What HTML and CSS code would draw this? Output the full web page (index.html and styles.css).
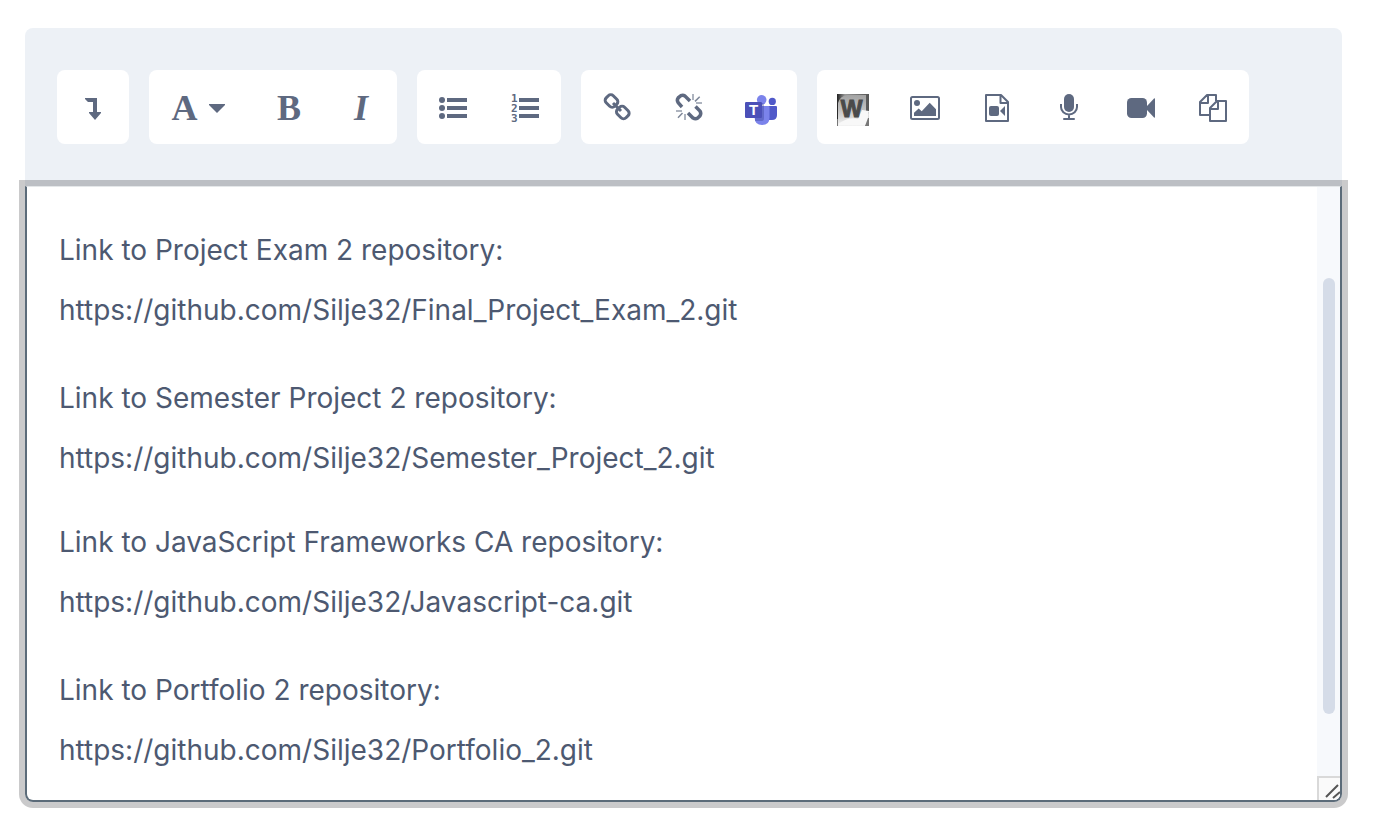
FILE: index.html
```html
<!DOCTYPE html>
<html lang="en">
<head>
<meta charset="utf-8">
<title>Editor</title>
<link rel="stylesheet" href="styles.css">
</head>
<body>
<main class="editor">
  <div class="toolbar" role="toolbar" aria-label="Formatting">
    <div class="group">
      <button class="tool" type="button" aria-label="Show more buttons"><svg class="icon" viewBox="0 0 32 32"><path d="M8 7H20V21H24V22L18 29L12 22V21H16V11H11L8 8z"/></svg></button>
    </div>
    <div class="group">
      <button class="tool tool-style" type="button" aria-label="Paragraph styles"><span class="letter">A</span><svg class="caret" viewBox="0 0 16 9"><path d="M0 0H16V1L8 9L0 1z"/></svg></button>
      <button class="tool tool-letter" type="button" aria-label="Bold"><span class="letter">B</span></button>
      <button class="tool tool-letter" type="button" aria-label="Italic"><span class="letter italic">I</span></button>
    </div>
    <div class="group">
      <button class="tool" type="button" aria-label="Unordered list"><svg class="icon" viewBox="0 0 32 32"><circle cx="5" cy="9" r="3"/><circle cx="5" cy="17" r="3"/><circle cx="5" cy="25" r="3"/><path d="M10 7h20v4H10zM10 15h20v4H10zM10 23h20v4H10z"/></svg></button>
      <button class="tool" type="button" aria-label="Ordered list"><svg class="icon" viewBox="0 0 32 32"><text class="num"><tspan x="2" y="11">1</tspan><tspan x="2" y="21">2</tspan><tspan x="2" y="31">3</tspan></text><path d="M10 7h20v4H10zM10 15h20v4H10zM10 23h20v4H10z"/></svg></button>
    </div>
    <div class="group">
      <button class="tool" type="button" aria-label="Link"><svg class="icon line" viewBox="0 0 32 32" stroke-width="3"><rect x="-6" y="-5" width="12" height="10" rx="3.5" transform="translate(10.5 10) rotate(45)"/><rect x="-6" y="-5" width="12" height="10" rx="3.5" transform="translate(21.800 21.500) rotate(45)"/><path d="M12 12L20 20"/></svg></button>
      <button class="tool" type="button" aria-label="Unlink"><svg class="icon line" viewBox="0 0 32 32" stroke-width="3.500"><path d="M9 16L5.400 12Q3.400 9 5.200 6.800L7.800 4.700Q10 3.700 12 5L17 10M15 22L20 27Q22.500 28.500 24.800 27L27 24.800Q28.500 22.500 27 20L22.500 15.500"/><path stroke-width="1.500" opacity=".8" d="M26.700 5.700L22 10.400M9.500 22L5 26.700"/><path stroke-width="2" opacity=".5" d="M20 3v6M23 12h6M3 20h6M12 23v6"/></svg></button>
      <button class="tool" type="button" aria-label="Microsoft Teams"><svg class="icon" viewBox="0 0 32 32"><circle cx="27.300" cy="10.400" r="3.600" fill="#5059c9"/><path fill="#5059c9" d="M22 15h9q1 0 1 1v8q0 5-5 5h-5z"/><circle cx="16.700" cy="8.800" r="4.800" fill="#7b83eb"/><path fill="#7b83eb" d="M9.600 15H23.500q1 0 1 1V26.500q0 7.500-7.400 7.500t-7.500-7.500z"/><path fill="#31388a" opacity=".35" d="M10 12h7q2 0 2 2v13q0 3-2 3H10z"/><rect y="11" width="17" height="16" rx="1.200" fill="#4b50b8"/><text class="teams-letter" x="8.500" y="24" text-anchor="middle">T</text></svg></button>
    </div>
    <div class="group">
      <button class="tool" type="button" aria-label="Word import"><svg class="icon" viewBox="0 0 32 32">
        <defs>
          <linearGradient id="frame" x1="0" y1="0" x2="1" y2="0"><stop offset="0" stop-color="#222"/><stop offset=".25" stop-color="#999"/><stop offset="1" stop-color="#555"/></linearGradient>
          <linearGradient id="tile" x1="0" y1="0" x2="0" y2="1"><stop offset="0" stop-color="#a2a2a2"/><stop offset=".5" stop-color="#c4c4c4"/><stop offset="1" stop-color="#f4f4f4"/></linearGradient>
        </defs>
        <rect y="3" width="32" height="32" fill="url(#frame)"/>
        <path fill="url(#tile)" d="M1 35V12Q3 5 10 4H29V24L32 22V32L28 35z"/>
        <path fill="#f8f8f8" d="M1 33Q12 25 21 28L25 19L32 20L30 34H2z"/>
        <path fill="#777" d="M31 27h1v8h-4zM0 28h1v7H0z"/>
        <text class="word-letter" x="14.500" y="26" text-anchor="middle">W</text></svg></button>
      <button class="tool" type="button" aria-label="Insert image"><svg class="icon" viewBox="0 0 32 32"><rect x="2" y="6" width="28" height="22" rx="1.500" fill="none" stroke="currentColor" stroke-width="2"/><circle cx="8" cy="12" r="3"/><path d="M5 25V21.700L9.700 17.500L12.700 20.300L20.700 11.700L27 18.300V25z"/></svg></button>
      <button class="tool" type="button" aria-label="Insert media"><svg class="icon" viewBox="0 0 32 32"><path fill="none" stroke="currentColor" stroke-width="2" stroke-linejoin="round" d="M5 4H20L27 11V30H5zM19.500 4V12H27"/><rect x="8" y="15" width="10" height="10" rx="2"/><path d="M19 20L24 15V25z"/></svg></button>
      <button class="tool" type="button" aria-label="Record audio"><svg class="icon" viewBox="0 0 32 32"><rect x="11" y="3" width="10" height="18" rx="5"/><path fill="none" stroke="currentColor" stroke-width="2" d="M8 13v3a8 7.500 0 0 0 16 0V13M16 24v4"/><rect x="10" y="27" width="12" height="2" rx="1"/></svg></button>
      <button class="tool" type="button" aria-label="Record video"><svg class="icon" viewBox="0 0 32 32"><rect x="2" y="7" width="20" height="20" rx="4.500"/><path d="M22 15L29 7.500Q30 7 30 8V26Q30 27 29 26.500L22 19z"/></svg></button>
      <button class="tool" type="button" aria-label="Manage files"><svg class="icon" viewBox="0 0 32 32"><path fill="none" stroke="currentColor" stroke-width="2" stroke-linejoin="round" d="M12 24H3V11L10 4H19V10M3 12H11V4M20 10H29V30H13V17zM13 18H21V10"/></svg></button>
    </div>
  </div>
  <div class="field">
    <div class="content" role="textbox" aria-multiline="true" aria-label="Submission text" contenteditable="true" spellcheck="false">
      <p>Link to Project Exam 2 repository:<br>https://github.com/Silje32/Final_Project_Exam_2.git</p>
      <p class="close">Link to Semester Project 2 repository:<br>https://github.com/Silje32/Semester_Project_2.git</p>
      <p>Link to JavaScript Frameworks CA repository:<br>https://github.com/Silje32/Javascript-ca.git</p>
      <p>Link to Portfolio 2 repository:<br>https://github.com/Silje32/Portfolio_2.git</p>
    </div>
    <div class="side">
      <div class="track"><div class="thumb"></div></div>
      <svg class="grip" viewBox="0 0 21 22"><path d="M7 19L19 7M14 20L21 14"/></svg>
    </div>
  </div>
</main>
</body>
</html>
```
FILE: styles.css
```css
* {
  box-sizing: border-box;
}

body {
  margin: 0;
  padding: 28px 32px 28px 25px;
  background: #fff;
  color: #4d5971;
  font-family: Inter, sans-serif;
}

.toolbar {
  display: flex;
  flex-wrap: wrap;
  gap: 20px;
  padding: 42px 32px;
  border-radius: 8px 8px 0 0;
  background: #edf1f6;
}

.group {
  display: flex;
  border-radius: 8px;
  background: #fff;
}

.tool {
  display: flex;
  align-items: center;
  justify-content: center;
  width: 72px;
  height: 74px;
  padding: 0;
  border: 0;
  border-radius: 8px;
  background: none;
  color: #5e6980;
}

.tool-letter {
  padding-top: 2px;
}

.tool-style {
  width: 104px;
  gap: 11px;
  padding: 2px 6px 0 0;
}

.icon {
  width: 32px;
  height: 32px;
  overflow: visible;
  fill: currentColor;
}

.line {
  fill: none;
  stroke: currentColor;
}

.caret {
  width: 16px;
  height: 9px;
  fill: currentColor;
}

.letter {
  font: bold 36px/40px "Liberation Serif", serif;
}

.italic {
  font-style: italic;
}

.num {
  font: bold 11px "DejaVu Sans Mono", monospace;
}

.teams-letter {
  fill: #fff;
  font: bold 15px "Liberation Sans", sans-serif;
}

.word-letter {
  fill: #4a4a4a;
  stroke: #4a4a4a;
  font: bold 23px "Liberation Sans", sans-serif;
}

.field {
  display: flex;
  border: 2px solid #5b6b79;
  border-top: 1px solid #e4e7e9;
  border-radius: 0 0 8px 8px;
  box-shadow: 0 0 0 6px rgba(32, 33, 36, 0.24);
  overflow: hidden;
}

.content {
  flex: 1;
  padding: 33px 32px 20px;
  outline: 0;
  font-size: 28px;
  line-height: 60px;
}

.content p {
  margin: 0 0 28px;
}

.content p.close {
  margin-bottom: 24px;
}

.content p:last-child {
  margin-bottom: 0;
}

.side {
  display: flex;
  flex-direction: column;
  width: 23px;
  background: #f7f9fc;
}

.track {
  flex: 1;
  padding: 91px 5px 62px 6px;
}

.thumb {
  height: 100%;
  border-radius: 6px;
  background: #d5dce8;
}

.grip {
  width: 23px;
  height: 24px;
  border: solid #d9d9d9;
  border-width: 2px 0 0 2px;
  background: #fafafa;
  fill: none;
  stroke: #555;
  stroke-width: 2;
}
```
